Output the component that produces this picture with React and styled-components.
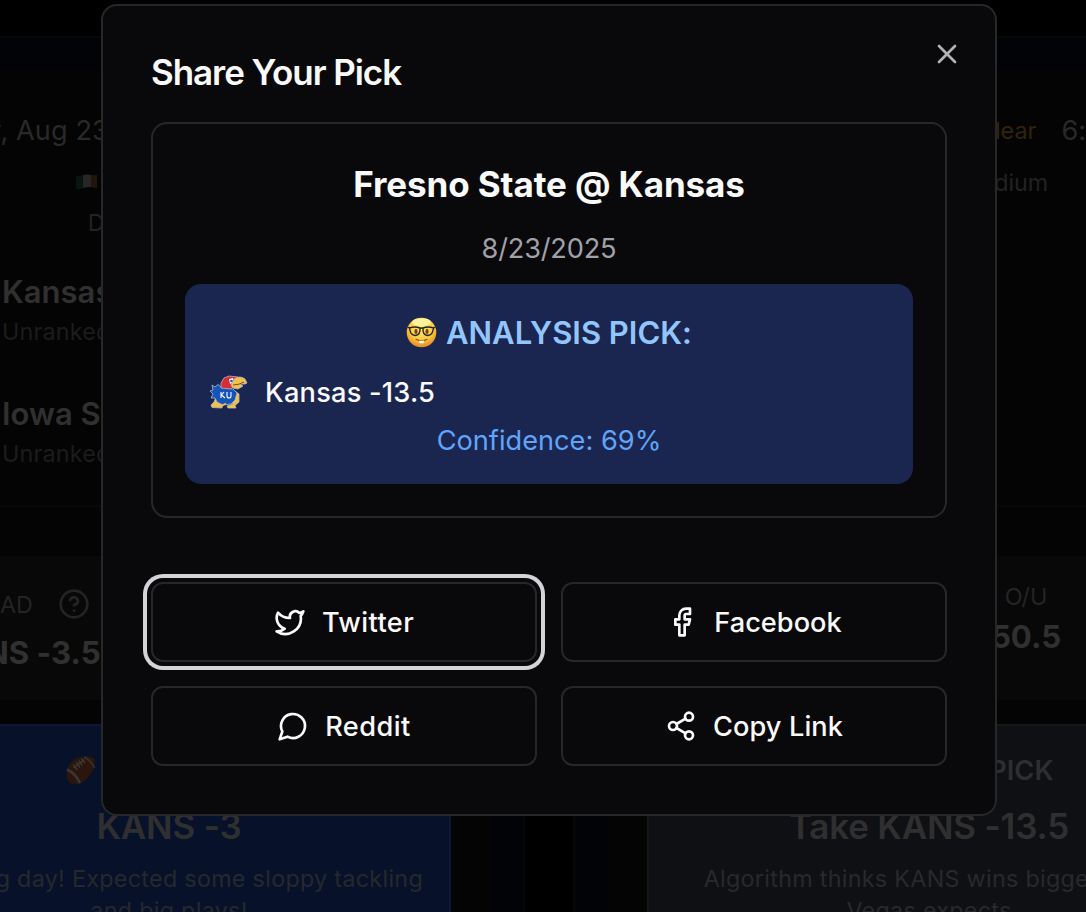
import React from "react";
import styled, { createGlobalStyle } from "styled-components";
import { Twitter, Facebook, Share2, X, CircleHelp } from "lucide-react";

const GlobalStyle = createGlobalStyle`
  *, *::before, *::after { box-sizing: border-box; }
  html, body { margin: 0; background: #000; overflow: hidden; }
  body {
    font-family: Inter, "Liberation Sans", sans-serif;
    font-feature-settings: "calt" 0;
    color: #fafafa;
    -webkit-font-smoothing: antialiased;
  }
  h1, h2, h3, p { margin: 0; }
`;

const Screen = styled.div`
  position: relative;
  width: 1086px;
  height: 912px;
  overflow: hidden;
  background: #000;
`;

/* ---------- game cards behind the dialog ---------- */

const Games = styled.div`
  display: flex;
  gap: 48px;
  margin-left: -187px;
  padding-top: 36px;
  width: 1472px;
`;

const GameCard = styled.section`
  width: 712px;
  flex: none;
  height: 1000px;
  padding: 32px;
  background: #020306;
  border: 2px solid #060708;
`;

const GameBody = styled.div`
  height: 100%;
  padding: 0 40px;
  background: #040404;
`;

const GameTop = styled.div`
  height: 437px;
  margin: 0 -40px;
  padding: 38px 40px 0;
  border-bottom: 2px solid #080808;
`;

const MetaRow = styled.div`
  display: flex;
  justify-content: space-between;
  align-items: center;
  height: 45px;
  font-size: 27.2px;
  color: #292929;
  letter-spacing: 0.05px;
`;

const Conditions = styled.div`
  display: flex;
  align-items: center;
  gap: 25px;
  margin-right: ${(p) => p.$end || 0}px;
`;

const Weather = styled.span`
  font-size: 23.3px;
  color: #30240a;
`;

const Venue = styled.div`
  display: flex;
  align-items: center;
  justify-content: center;
  gap: 8px;
  height: 40px;
  margin-top: 9px;
  font-size: 23.3px;
  color: #222;
`;

const City = styled(Venue)`
  margin-top: 0;
  letter-spacing: 0.3px;
`;

const Team = styled.div`
  height: 84px;
  margin-top: ${(p) => p.$gap}px;
  padding-left: 115px;
`;

const TeamName = styled.h3`
  font-size: 31px;
  line-height: 44px;
  font-weight: 600;
  color: #303030;
`;

const Rank = styled.p`
  font-size: 23.3px;
  line-height: 36px;
  letter-spacing: 0.2px;
  color: #1c1c1c;
`;

const Odds = styled.div`
  display: flex;
  height: 144px;
  margin: 49px -40px 24px;
  padding: ${(p) => (p.$tall ? 24 : 21)}px 40px 0;
  background: #080808;
`;

const Odd = styled.div`
  width: 282px;
  display: flex;
  flex-direction: column;
  align-items: center;
  margin-left: ${(p) => p.$shift || 0}px;
`;

const OddLabel = styled.div`
  display: flex;
  align-items: center;
  gap: 25px;
  height: ${(p) => (p.$tall ? 48 : 38)}px;
  padding-right: ${(p) => (p.$tall ? 9 : 0)}px;
  font-size: 23.3px;
  color: #242424;
`;

const OddValue = styled.div`
  font-size: 31.2px;
  line-height: ${(p) => (p.$tall ? 51 : 45)}px;
  font-weight: 700;
  color: #303030;
`;

const Pick = styled.div`
  height: 260px;
  padding: 22px 24px;
  text-align: center;
  background: ${(p) => (p.$blue ? "#08112a" : "#0f1014")};
  border: 2px solid ${(p) => (p.$blue ? "#0b1831" : "#151719")};
`;

const PickLabel = styled.div`
  display: flex;
  align-items: center;
  justify-content: center;
  gap: 9px;
  height: 44px;
  padding-left: ${(p) => p.$indent}px;
  font-size: 27.2px;
  font-weight: 600;
  color: #2e2e30;
`;

const PickTitle = styled.h2`
  margin-top: 10px;
  font-size: 35px;
  line-height: 48px;
  font-weight: 600;
  letter-spacing: -0.2px;
  color: #2f2f30;
`;

const PickNote = styled.p`
  margin-top: 13px;
  font-size: 23.3px;
  line-height: 32px;
  letter-spacing: 0.3px;
  white-space: nowrap;
  color: ${(p) => (p.$blue ? "#25292c" : "#29292a")};
`;

/* ---------- dialog ---------- */

const Overlay = styled.div`
  position: absolute;
  inset: 0;
  padding: 4px 0 0 101px;
`;

const Dialog = styled.div`
  position: relative;
  width: 896px;
  height: 812px;
  padding: 48px;
  background: #09090b;
  border: 2px solid #27272a;
  border-radius: 16px;
`;

const CloseButton = styled.button`
  position: absolute;
  top: 32px;
  right: 32px;
  width: 32px;
  height: 32px;
  padding: 0;
  border: 0;
  background: none;
  color: #b2b2b4;
`;

const DialogTitle = styled.h1`
  font-size: 35px;
  line-height: 36px;
  font-weight: 600;
  letter-spacing: -1.06px;
`;

const Preview = styled.div`
  margin-top: 32px;
  padding: 32px;
  border: 2px solid #27272a;
  border-radius: 16px;
  text-align: center;
`;

const Matchup = styled.h2`
  font-size: 35px;
  line-height: 56px;
  font-weight: 700;
  letter-spacing: -0.1px;
`;

const GameDate = styled.p`
  margin: 17px 0 15px;
  font-size: 27.2px;
  line-height: 40px;
  letter-spacing: -0.2px;
  color: #a1a1aa;
`;

const Analysis = styled.div`
  height: 200px;
  padding: 24px;
  border-radius: 16px;
  background: #1a2650;
`;

const AnalysisTitle = styled.h3`
  display: flex;
  align-items: center;
  justify-content: center;
  gap: 9px;
  height: 48px;
  font-size: 31px;
  font-weight: 600;
  color: #93c5fd;
`;

const AnalysisPick = styled.div`
  display: flex;
  align-items: center;
  gap: 16px;
  height: 40px;
  margin-top: 16px;
  font-size: 27.2px;
  font-weight: 500;
  letter-spacing: 0.22px;
`;

const Confidence = styled.p`
  margin-top: 9px;
  font-size: 27.2px;
  line-height: 40px;
  color: #60a5fa;
`;

const ShareGrid = styled.div`
  display: grid;
  grid-template-columns: 1fr 1fr;
  gap: 24px;
  margin-top: 64px;
`;

const ShareButton = styled.button`
  display: flex;
  align-items: center;
  justify-content: center;
  gap: 16px;
  height: 80px;
  padding: 0;
  border: 2px solid #27272a;
  border-radius: 12px;
  background: #09090b;
  color: #fafafa;
  font: 500 27.2px/40px Inter, "Liberation Sans", sans-serif;
  letter-spacing: ${(p) => p.$track || 0}px;
  box-shadow: ${(p) => (p.$focused ? "0 0 0 4px #09090b, 0 0 0 8px #d4d4d8" : "none")};
`;

const ShareLabel = styled.span`
  padding-top: 2px;
`;

/* ---------- drawings ---------- */

const MessageIcon = () => (
  <svg width="32" height="32" viewBox="0 0 24 24" fill="none" stroke="currentColor" strokeWidth="2" strokeLinecap="round" strokeLinejoin="round">
    <path d="M7.9 20A9 9 0 1 0 4 16.1L2 22Z" />
  </svg>
);

const Face = styled.svg`
  width: ${(p) => p.$size}px;
  height: ${(p) => p.$size}px;
  opacity: ${(p) => (p.$dim ? 0.2 : 1)};
`;

const NerdFace = ({ size = 31, dim }) => (
  <Face $size={size} $dim={dim} viewBox="0 0 31 31">
    <defs>
      <radialGradient id="face" cx="50%" cy="32%" r="70%">
        <stop offset="0" stopColor="#fff06a" />
        <stop offset="0.6" stopColor="#fbc942" />
        <stop offset="1" stopColor="#e2841c" />
      </radialGradient>
    </defs>
    <circle cx="15.5" cy="15.5" r="14.8" fill="url(#face)" />
    <ellipse cx="15.5" cy="5" rx="9.5" ry="3.8" fill="#fffbc0" opacity="0.7" />
    <ellipse cx="10" cy="14.4" rx="1.6" ry="2.6" fill="#7a4415" />
    <ellipse cx="21" cy="14.4" rx="1.6" ry="2.6" fill="#7a4415" />
    <g fill="none" stroke="#24242a" strokeWidth="1.4">
      <path d="M3.6 10.8 Q9 9.2 14 11 Q14.6 18 9.3 18.5 Q4 18.3 3.6 10.8Z" />
      <path d="M27.4 10.8 Q22 9.2 17 11 Q16.4 18 21.7 18.5 Q27 18.3 27.4 10.8Z" />
      <path d="M14 11.4 Q15.5 10.6 17 11.4 M3.7 10.8 L1.6 10.4 M27.3 10.8 L29.4 10.4" />
    </g>
    <path d="M10 22.3 Q15.5 25.2 21 22.3" stroke="#95501b" strokeWidth="1.1" fill="none" strokeLinecap="round" />
    <path d="M13.1 23.5 Q15.5 24 17.9 23.5 L17.7 26 Q15.5 26.6 13.3 26Z" fill="#fff" />
  </Face>
);

const Jayhawk = () => (
  <svg width="40" height="40" viewBox="0 0 40 40">
    <g stroke="#aeb8cc" strokeWidth="0.8" strokeLinejoin="round">
      <path d="M7 25 L5 30 L2 33 L3 35.5 L13 36 L14 32 L11 29Z" fill="#f2c14c" />
      <path d="M22 29 L24 32 L18 34 L19 36 L27 36 L26 33.5 L30 30 L30 22 L26 19Z" fill="#f2c14c" />
      <path d="M3 13 L6 15 L9 12.5 L12 15 L24 17 L28 21 L26 28 L22 32 L14 33 L8 30 L6 26 L2 26 L4 22 L1 19 L4 18Z" fill="#1555b7" />
      <path d="M12 16 L12 11 L15 6 L20 4 L29 5 L27 12 L22 17Z" fill="#d82b37" />
      <path d="M25 7 Q31 3 36 7 L38 11 L36 12 L31 12 L34 14 L29 17 L24 16 L22 13Z" fill="#f2c14c" />
    </g>
    <path d="M20 7 L24 6 L24 10 L21 12Z" fill="#fff" />
    <circle cx="22.5" cy="9" r="1.3" fill="#1555b7" />
    <path d="M24 13 Q30 13 35 10" stroke="#7c4b29" strokeWidth="1" fill="none" />
    <path d="M12 20 V26 M15 20 L12.5 23 L16 26 M18 20 V24 Q18 26 20 26 Q22 26 22 24 V20" stroke="#fff" strokeWidth="1.1" fill="none" />
    <path d="M13 33.5 L17 31.5 M20 35 L26 35" stroke="#f2c14c" strokeWidth="1.5" />
  </svg>
);

const Football = () => (
  <svg width="30" height="30" viewBox="0 0 30 30">
    <path d="M1 17 Q2 5 15 2 Q23 0 28 3 Q30 8 27 15 Q22 26 12 29 Q6 30 3 27 Q0 24 1 17Z" fill="#2b150d" />
    <path d="M18 2 Q25 5 28.5 13" stroke="#37312c" strokeWidth="1.6" fill="none" />
    <path d="M1 14.5 Q9 18 14 28" stroke="#393735" strokeWidth="2.6" fill="none" />
    <path d="M8 12.5 L18 5 M7.5 10 L11 14.5 M10.5 8 L13.5 12 M13 6 L16 10 M15.5 4 L18.5 7.5" stroke="#3b3735" strokeWidth="1.5" strokeLinecap="round" />
  </svg>
);

const IrishFlag = () => (
  <svg width="22" height="16" viewBox="0 0 22 16">
    <path d="M0 2 Q4 2.5 7 1 V14 Q4 16 0 15Z" fill="#07150f" />
    <path d="M7 1 Q11 0 15 1 V13 Q11 13 7 14Z" fill="#262626" />
    <path d="M15 1 Q18 1.5 21 1 V14 Q18 14 15 13Z" fill="#24150a" />
  </svg>
);

const shares = [
  { label: "Twitter", icon: <Twitter size={32} />, focused: true, track: 0.4 },
  { label: "Facebook", icon: <Facebook size={32} />, track: 0 },
  { label: "Reddit", icon: <MessageIcon />, track: 0.45 },
  { label: "Copy Link", icon: <Share2 size={32} />, track: 0.1 },
];

export default function App() {
  return (
    <Screen>
      <GlobalStyle />
      <Games>
        <GameCard>
          <GameBody>
            <GameTop>
              <MetaRow><span>Saturday, Aug 23</span></MetaRow>
              <Venue><IrishFlag />Aviva Stadium</Venue>
              <City>Dublin, Ireland</City>
              <Team $gap={28}>
                <TeamName>Kansas State</TeamName>
                <Rank>Unranked</Rank>
              </Team>
              <Team $gap={38}>
                <TeamName>Iowa State</TeamName>
                <Rank>Unranked</Rank>
              </Team>
            </GameTop>
            <Odds $tall>
              <Odd $shift={-8}>
                <OddLabel $tall>SPREAD<CircleHelp size={32} /></OddLabel>
                <OddValue $tall>KANS -3.5</OddValue>
              </Odd>
            </Odds>
            <Pick $blue>
              <PickLabel $indent={10}><Football />HUMAN PICK</PickLabel>
              <PickTitle>KANS -3</PickTitle>
              <PickNote $blue>Opening day! Expected some sloppy tackling<br />and big plays!</PickNote>
            </Pick>
          </GameBody>
        </GameCard>
        <GameCard>
          <GameBody>
            <GameTop>
              <MetaRow>
                <span />
                <Conditions $end={41}><Weather>Clear</Weather><span>6:30 PM</span></Conditions>
              </MetaRow>
              <Venue>KU Memorial Stadium</Venue>
            </GameTop>
            <Odds>
              <Odd $shift={238}>
                <OddLabel>O/U</OddLabel>
                <OddValue>50.5</OddValue>
              </Odd>
            </Odds>
            <Pick>
              <PickLabel $indent={6}><NerdFace size={27} dim />ANALYSIS PICK</PickLabel>
              <PickTitle>Take KANS -13.5</PickTitle>
              <PickNote>Algorithm thinks KANS wins bigger than<br />Vegas expects</PickNote>
            </Pick>
          </GameBody>
        </GameCard>
      </Games>
      <Overlay>
        <Dialog role="dialog">
          <DialogTitle>Share Your Pick</DialogTitle>
          <Preview>
            <Matchup>Fresno State @ Kansas</Matchup>
            <GameDate>8/23/2025</GameDate>
            <Analysis>
              <AnalysisTitle><NerdFace />ANALYSIS PICK:</AnalysisTitle>
              <AnalysisPick><Jayhawk />Kansas -13.5</AnalysisPick>
              <Confidence>Confidence: 69%</Confidence>
            </Analysis>
          </Preview>
          <ShareGrid>
            {shares.map((s) => (
              <ShareButton key={s.label} $focused={s.focused} $track={s.track}>
                {s.icon}
                <ShareLabel>{s.label}</ShareLabel>
              </ShareButton>
            ))}
          </ShareGrid>
          <CloseButton aria-label="Close"><X size={32} /></CloseButton>
        </Dialog>
      </Overlay>
    </Screen>
  );
}
